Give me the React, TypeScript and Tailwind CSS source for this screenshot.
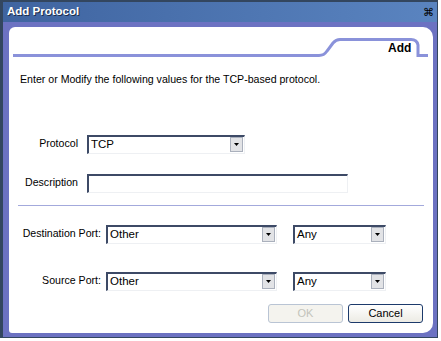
import React from "react";

const font = { fontFamily: '"Liberation Sans", Arial, sans-serif' };

function Arrow() {
  return (
    <div className="flex h-[15px] w-[13px] items-center justify-center border border-[#aab0bc] bg-[#e2e3e6]">
      <svg width="5" height="3" viewBox="0 0 5 3">
        <path d="M0 0h5L2.5 3z" fill="#000" />
      </svg>
    </div>
  );
}

function Select({ value, width }: { value: string; width: string }) {
  return (
    <div
      className={`flex h-[19px] ${width} items-center border-t-2 border-l-2 border-r border-b border-t-[#3d4a66] border-l-[#3d4a66] border-r-[#eef0f3] border-b-[#eef0f3] bg-white pl-[2px] pr-[1px]`}
    >
      <span className="flex-1 text-[11.5px] leading-none text-black">{value}</span>
      <Arrow />
    </div>
  );
}

export default function App() {
  return (
    <div className="relative h-[341px] w-[441px] overflow-hidden bg-white" style={font}>
      <div className="flex h-[338px] w-[438px] flex-col border-l-[3px] border-t-2 border-r border-b border-[#33465f] bg-[#6c72c2]">
        {/* Title bar */}
        <div className="flex h-[20px] items-center justify-between bg-gradient-to-r from-[#3f64a0] to-[#5a84c0] pl-[4px] pr-[3px]">
          <span className="text-[11.5px] font-bold text-white [text-shadow:1px_1px_0_#1e2d4a]">Add Protocol</span>
          <span className="text-[11px] leading-none text-black">⌘</span>
        </div>

        {/* Body */}
        <div className="mt-[5px] mb-[4px] ml-[6px] mr-[4px] flex flex-1 flex-col rounded-tl-[6px] rounded-tr-[10px] rounded-br-[10px] rounded-bl-[3px] bg-white">
          {/* Tab strip */}
          <div className="relative h-[31px]">
            <svg width="424" height="31" viewBox="0 0 424 31" className="absolute left-0 top-0">
              <path
                d="M4 28.5 H310 Q315 28.5 318 24 L324 16 Q327 12.5 331 12.5 H402 Q408 12.5 409 18 V28.5 H419"
                fill="none"
                stroke="#8a92da"
                strokeWidth="3"
              />
            </svg>
            <span className="absolute left-[379px] top-[12px] text-[12px] font-bold text-black">Add</span>
          </div>

          <p className="mt-[14px] pl-[11px] text-[10.6px] text-black">
            Enter or Modify the following values for the TCP-based protocol.
          </p>

          {/* Protocol / Description */}
          <div className="mt-[47px] flex flex-col gap-[20px]">
            <div className="flex items-center">
              <span className="w-[69px] text-right text-[10.6px] text-black">Protocol</span>
              <div className="ml-[9px]">
                <Select value="TCP" width="w-[158px]" />
              </div>
            </div>
            <div className="flex items-center">
              <span className="w-[69px] text-right text-[10.6px] text-black">Description</span>
              <div className="ml-[9px] h-[19px] w-[261px] border-t-2 border-l-2 border-r border-b border-t-[#3d4a66] border-l-[#3d4a66] border-r-[#eef0f3] border-b-[#eef0f3] bg-white" />
            </div>
          </div>

          <div className="mt-[12px] ml-[9px] mr-[9px] h-px bg-[#a3a9dc]" />

          {/* Ports */}
          <div className="mt-[19px] flex flex-col gap-[28px]">
            <div className="flex items-center">
              <span className="w-[92px] text-right text-[10.6px] text-black">Destination Port:</span>
              <div className="ml-[5px]">
                <Select value="Other" width="w-[171px]" />
              </div>
              <div className="ml-[16px]">
                <Select value="Any" width="w-[93px]" />
              </div>
            </div>
            <div className="flex items-center">
              <span className="w-[92px] text-right text-[10.6px] text-black">Source Port:</span>
              <div className="ml-[5px]">
                <Select value="Other" width="w-[171px]" />
              </div>
              <div className="ml-[16px]">
                <Select value="Any" width="w-[93px]" />
              </div>
            </div>
          </div>

          {/* Buttons */}
          <div className="mt-[13px] flex justify-end gap-[5px] pr-[10px]">
            <button
              disabled
              className="h-[19px] w-[75px] rounded-[3px] border border-[#b9c4d4] bg-[#f4f3ee] text-[11px] text-[#c3c3bb]"
            >
              OK
            </button>
            <button className="h-[19px] w-[75px] rounded-[3px] border border-[#1c3a6b] bg-gradient-to-b from-[#ffffff] to-[#ecebe4] text-[11px] text-black">
              Cancel
            </button>
          </div>
        </div>
      </div>
    </div>
  );
}
